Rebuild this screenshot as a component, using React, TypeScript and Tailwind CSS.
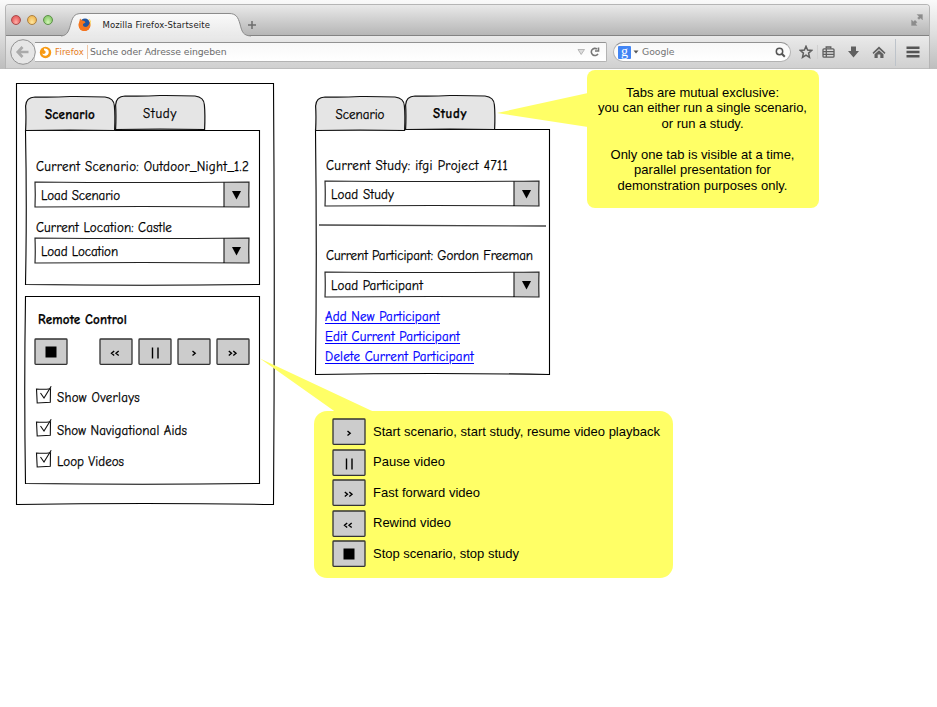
import { useLayoutEffect, useRef, type ReactNode } from "react";

const HAND = "font-['Comic_Sans_MS','Comic_Neue','Open_Sans',sans-serif] [-webkit-text-stroke:0.25px_currentColor]";

/* A single line of text whose tracking is computed so it fills the given width. */
function Fit({ w, className = "", children }: { w: number; className?: string; children: ReactNode }) {
  const ref = useRef<HTMLSpanElement>(null);
  useLayoutEffect(() => {
    const el = ref.current;
    if (!el) return;
    const n = (el.textContent || "").length;
    el.style.letterSpacing = "0px";
    const natural = el.getBoundingClientRect().width;
    el.style.letterSpacing = `${(w - natural) / n}px`;
  }, [w]);
  return (
    <span ref={ref} className={`inline-block shrink-0 whitespace-pre ${className}`}>
      {children}
    </span>
  );
}

function Frame({ w, h, top = 0, right = 0, bottom = 0, left = 0 }: { w: number; h: number; top?: number; right?: number; bottom?: number; left?: number }) {
  const r = w - 0.5;
  const b = h - 0.5;
  return (
    <svg className="pointer-events-none absolute inset-0" width={w} height={h} overflow="visible" fill="none" stroke="#000" strokeWidth="1.1">
      <path d={`M.5 .5Q${w / 2} ${0.5 + top} ${r} .5Q${r + right} ${h / 2} ${r} ${b}Q${w / 2} ${b + bottom} .5 ${b}Q${0.5 + left} ${h / 2} .5 .5Z`} />
    </svg>
  );
}

function Tab({ label, w, bold = false, low = false }: { label: string; w: number; bold?: boolean; low?: boolean }) {
  return (
    <div className={`relative flex h-[35px] w-[90px] items-center justify-center ${low ? "mt-px" : ""}`}>
      <svg className="absolute inset-0" width="90" height="35" overflow="visible" fill="#e5e5e5" stroke="#111" strokeWidth="1.2">
        <path d="M.6 34.5Q1.3 20 .6 10Q1 1.4 10 1Q28 1.5 45 .5Q65 .4 80 1Q89 2 89.4 10Q90.3 20 89.6 34.5Q45 33.7 .6 34.5Z" />
      </svg>
      <Fit w={w} className={`relative mt-[3px] text-[13px] leading-5 ${bold ? "font-bold" : ""}`}>{label}</Fit>
    </div>
  );
}

function Select({ label, w }: { label: string; w: number }) {
  return (
    <div className="relative flex h-[27px] w-[216px] items-center">
      <svg className="absolute inset-0" width="216" height="27" fill="none">
        <path d="M190 1H215V26H190Z" fill="#ccc" />
        <path d="M1 1Q108 2 215 1Q214.6 14 215 26Q108 25 1 26Q1.5 14 1 1ZM190 1V26" stroke="#222" strokeWidth="1.15" />
        <path d="M198 10H207L202.500 18.500Z" fill="#000" />
      </svg>
      <Fit w={w} className="relative ml-[7px] mt-[2px] text-[13px] leading-5">{label}</Fit>
    </div>
  );
}

type Kind = "stop" | "rewind" | "pause" | "play" | "forward";
const GLYPHS: Record<Kind, string> = {
  stop: "",
  rewind: "M15.200 13L12.500 15.300L15.200 17.500M19.700 13L17 15.300L19.700 17.500",
  pause: "M14.500 9.500V20.500M20 9.500V20.500",
  play: "M15.500 13L18.200 15.300L15.500 17.500",
  forward: "M12.800 13L15.500 15.300L12.800 17.500M17.300 13L20 15.300L17.300 17.500",
};

function MediaButton({ kind }: { kind: Kind }) {
  return (
    <button className="block h-[27px] w-[34px] shrink-0">
      <svg width="34" height="27" fill="none" stroke="#000">
        <rect x="1" y="1" width="32" height="25.300" rx=".8" fill="#ccc" stroke="#333" strokeWidth="1.300" />
        {kind === "stop" ? <path d="M11.500 8.500H22.500V19.500H11.500Z" fill="#000" stroke="none" /> : <path d={GLYPHS[kind]} strokeWidth="1.400" />}
      </svg>
    </button>
  );
}

function Check({ label, w }: { label: string; w: number }) {
  return (
    <label className="flex h-5 items-center">
      <svg width="18" height="20" fill="none" stroke="#111" strokeWidth="1.1" overflow="visible">
        <path d="M.5 3Q8 3.700 14.500 2.700L14.300 16.200L1.200 17Z" />
        <path d="M4.500 7L8 12L15.200 .3" />
      </svg>
      <Fit w={w} className="ml-[3px] mt-[3px] text-[13px] leading-5">{label}</Fit>
    </label>
  );
}

function BrowserChrome() {
  return (
    <header className="h-[69px] bg-linear-to-b from-[#fafafa] via-[#dedede] to-[#bdbdbd]">
      <div className="h-1" />
      <div className="mx-[5px] mr-[7px] h-[65px] overflow-hidden rounded-t-[4px] border-x border-t border-[#b5b5b5]">
        <div className="relative flex h-[31px] items-center border-b border-[#838383] bg-linear-to-b from-[#e9e9e9] to-[#b6b6b6]">
          <div className="ml-[5px] flex gap-[6px]">
            <i className="size-[10px] rounded-full border border-[#a94c4c] bg-radial-[at_50%_80%] from-[#ffb0a8] to-[#df4044]" />
            <i className="size-[10px] rounded-full border border-[#ad8040] bg-radial-[at_50%_80%] from-[#ffe7a0] to-[#e9a83a]" />
            <i className="size-[10px] rounded-full border border-[#5c9048] bg-radial-[at_50%_80%] from-[#d3f7b6] to-[#70bb53]" />
          </div>
          <div className="relative ml-2 flex h-full w-[192px] items-center">
            <svg className="absolute left-0 top-0" width="192" height="32" overflow="visible">
              <defs>
                <linearGradient id="tab" x1="0" y1="0" x2="0" y2="1"><stop stopColor="#fafafa" /><stop offset="1" stopColor="#e9e9e9" /></linearGradient>
                <linearGradient id="fox" x1="0" y1="0" x2="1" y2="1"><stop stopColor="#ff9a1f" /><stop offset="1" stopColor="#dd431c" /></linearGradient>
              </defs>
              <path d="M0 31C7 30.500 8 25 10 18C12 10 15 8.500 21 8.500H168C175 8.500 177 12 179 19C181 27 182 30.500 190 31" fill="url(#tab)" stroke="#8b8b8b" />
              <circle cx="23.500" cy="20" r="6" fill="url(#fox)" />
              <circle cx="24" cy="18" r="4.500" fill="#23569f" />
              <path d="M18.500 16L19 13.500L21 15.500Q23.500 15 24.500 17.500L22 19Q21.500 22 25 22Q27.500 21.500 28.500 18Q30.500 23 26 25.500Q20.500 27.500 18 22.500Q17.200 19 18.500 16Z" fill="#f5751e" />
              <path d="M27.500 14Q30.500 17 29 22Q31 18 29 14.500Z" fill="#ffd13b" />
            </svg>
            <Fit w={107.500} className="relative ml-[41.5px] mt-[9px] font-['DejaVu_Sans',sans-serif] text-[8.5px] leading-4 text-[#222]">Mozilla Firefox-Startseite</Fit>
          </div>
          <svg className="mt-[9px] -ml-[6px]" width="10" height="10" stroke="#6d6d6d" strokeWidth="1.500"><path d="M5 1V9M1 5H9" /></svg>
          <svg className="ml-auto mr-[6px]" width="12" height="12" fill="#8c8c8c" stroke="#8c8c8c">
            <path d="M6 .5H11.500V6L9.500 4L8 5.500L6.500 4L8 2.500ZM.5 6V11.500H6L4.500 9.800L6 8.200L4 6.200L2.500 7.700Z" strokeWidth=".3" />
          </svg>
        </div>
        <div className="flex h-[33px] items-center border-b border-[#bdbdbd] bg-linear-to-b from-[#eaeaea] to-[#d0d0d0]">
          <svg className="relative ml-1 shrink-0" width="26" height="26">
            <circle cx="13" cy="13" r="12.300" fill="#e6e6e6" stroke="#929292" />
            <path d="M12.500 8L7.800 13L12.500 18M8 13H18.500" fill="none" stroke="#aaa" strokeWidth="2.700" />
          </svg>
          <div className="-ml-px flex h-[20px] w-[572px] shrink-0 items-center rounded-r-[2px] border border-l-0 border-[#b3b3b3] border-t-[#929292] bg-linear-to-b from-[#f8f8f8] to-white">
            <svg className="ml-[4px]" width="13" height="13">
              <circle cx="6.500" cy="6.500" r="5.700" fill="#f89a13" />
              <path d="M5 2.500Q8 2 9.500 4.500Q10.500 8 7.500 9.500Q4.500 10.500 3 7.500Q5 8.500 6.500 7Q7.500 5.500 5 4Z" fill="#fff" />
            </svg>
            <Fit w={29} className="ml-[3px] font-['DejaVu_Sans',sans-serif] text-[8.5px] leading-4 text-[#e67b22]">Firefox</Fit>
            <i className="ml-[3px] h-[14px] w-px bg-[#f1c6a3]" />
            <Fit w={136.500} className="ml-[2px] font-['DejaVu_Sans',sans-serif] text-[9.3px] leading-4 text-[#6c6c6c]">Suche oder Adresse eingeben</Fit>
            <svg className="ml-auto" width="8" height="6"><path d="M1 .5H7.500L4.200 5.500Z" fill="#ddd" stroke="#aaa" strokeWidth=".8" /></svg>
            <svg className="ml-[5px] mr-[6px]" width="10" height="10" fill="none" stroke="#777" strokeWidth="1.600"><path d="M7 2A3.600 3.600 0 1 0 8 6.800M8.500 .5V4H5" /></svg>
          </div>
          <div className="ml-[6px] flex h-[20px] w-[178px] shrink-0 items-center rounded-full border border-[#b3b3b3] border-t-[#929292] bg-linear-to-b from-[#f8f8f8] to-white">
            <b className="ml-[4px] flex size-[13px] items-center justify-center rounded-[1px] bg-[#4285f4] pb-px font-['Liberation_Serif',serif] text-[14px] font-normal leading-none text-white">g</b>
            <svg className="ml-[2px]" width="6" height="4"><path d="M.5 .5H5.500L3 3.500Z" fill="#555" /></svg>
            <Fit w={32.500} className="ml-[3px] font-['DejaVu_Sans',sans-serif] text-[9.3px] leading-4 text-[#757575]">Google</Fit>
            <svg className="ml-auto mr-[4px]" width="11" height="11" fill="none" stroke="#555"><circle cx="4.500" cy="4.500" r="3.200" strokeWidth="1.500" /><path d="M6.800 6.800L9.800 9.800" strokeWidth="2" /></svg>
          </div>
          <div className="ml-[8px] flex shrink-0 items-center">
            <svg width="14" height="14" fill="none" stroke="#5e5e5e" strokeWidth="1.500"><path d="M7 1.300L8.600 5L12.700 5.400L9.600 8.100L10.500 12.300L7 10.100L3.500 12.300L4.400 8.100L1.300 5.400L5.400 5Z" /></svg>
            <i className="ml-[4px] h-[14px] w-px bg-[#d0d0d0]" />
            <svg className="ml-[4px]" width="13" height="12" fill="none" stroke="#5e5e5e" strokeWidth="1.300"><rect x="1" y="2.800" width="11" height="8.400" rx="1" /><path d="M4.200 2.500V1H8.800V2.500M1 5.600H12M1 8.400H12M4.300 3V11" /></svg>
            <svg className="ml-[12px]" width="13" height="12" fill="#606060"><path d="M4 .5H9V5H12L6.500 11.500L1 5H4Z" /></svg>
            <svg className="ml-[12px]" width="14" height="13" fill="#606060"><path d="M7 .5L13.500 6.800L12.500 8L7 3L1.500 8L.5 6.800ZM2.500 8.200L7 4.200L11.500 8.200V12H8.300V8.500H5.700V12H2.500Z" /></svg>
            <i className="ml-[9px] h-[27px] w-px bg-[#bdc3ca]" />
            <svg className="ml-[10px]" width="14" height="12" stroke="#555" strokeWidth="2.500"><path d="M.5 1.800H13.500M.5 6H13.500M.5 10.200H13.500" /></svg>
          </div>
        </div>
      </div>
    </header>
  );
}

function TabsCallout() {
  const lines: [string, number][] = [
    ["Tabs are mutual exclusive:", 153],
    ["you can either run a single scenario,", 209],
    ["or run a study.", 82],
    ["", 0],
    ["Only one tab is visible at a time,", 184],
    ["parallel presentation for", 137],
    ["demonstration purposes only.", 170],
  ];
  return (
    <aside className="absolute left-[587px] top-[70px] h-[138px] w-[232px] rounded-[8px] bg-[#ff6] pr-px pt-[15px] font-['Liberation_Sans',Arial,sans-serif] text-[13px]">
      <svg className="absolute -left-[90px] top-0" width="91" height="60" fill="#ff6"><path d="M0 43L91 23V57Z" /></svg>
      {lines.map(([t, w], i) => (
        <div key={i} className="flex h-[15.5px] items-center justify-center leading-4">{t && <Fit w={w}>{t}</Fit>}</div>
      ))}
    </aside>
  );
}

function ControlsCallout() {
  const rows: [Kind, string, number][] = [
    ["play", "Start scenario, start study, resume video playback", 287],
    ["pause", "Pause video", 72],
    ["forward", "Fast forward video", 107],
    ["rewind", "Rewind video", 78],
    ["stop", "Stop scenario, stop study", 146],
  ];
  return (
    <aside className="absolute left-[314px] top-[410.5px] flex h-[167.5px] w-[358.5px] flex-col gap-[3.5px] rounded-[13px] bg-[#ff6] pl-[18px] pt-[7.5px] font-['Liberation_Sans',Arial,sans-serif] text-[13px]">
      <svg className="absolute -left-[54px] -top-[53px]" width="120" height="55" fill="#ff6"><path d="M0 .5L77 55H117L111 52.500Z" /></svg>
      {rows.map(([k, t, w]) => (
        <div key={k} className="flex h-[27px] items-center gap-[7px]">
          <MediaButton kind={k} />
          <Fit w={w} className="leading-4">{t}</Fit>
        </div>
      ))}
    </aside>
  );
}

export default function App() {
  return (
    <div className="relative h-[707px] w-[937px] overflow-hidden bg-white font-['Open_Sans',sans-serif] text-black">
      <BrowserChrome />
      <main className={`flex items-start pl-4 pt-[14px] ${HAND}`}>
        <section className="relative h-[422px] w-[258px] pl-[9px] pt-3">
          <Frame w={258} h={422} right={1.5} bottom={-2} />
          <nav className="relative z-10 flex h-[35px]">
            <Tab label="Scenario" w={50} bold low />
            <Tab label="Study" w={34} />
          </nav>
          <div className="relative flex h-[155px] w-[235px] flex-col items-start pl-[9px] pt-[26px]">
            <Frame w={235} h={155} left={1.5} bottom={1.5} />
            <Fit w={213} className="ml-[2px] h-5 text-[13px] leading-[21px]">Current Scenario: Outdoor_Night_1.2</Fit>
            <div className="mt-[5px]"><Select label="Load Scenario" w={79} /></div>
            <Fit w={136} className="ml-[2px] mt-[9px] h-5 text-[13px] leading-[21px]">Current Location: Castle</Fit>
            <Select label="Load Location" w={77} />
          </div>
          <div className="relative mt-[11px] flex h-[188px] w-[235px] flex-col items-start pl-[9px] pt-[13px]">
            <Frame w={235} h={188} left={-1.5} bottom={1.5} />
            <Fit w={89} className="ml-1 h-5 text-[13px] font-bold leading-[21px]">Remote Control</Fit>
            <div className="mt-[9px] flex gap-[5px]">
              <div className="mr-[26px]"><MediaButton kind="stop" /></div>
              <MediaButton kind="rewind" />
              <MediaButton kind="pause" />
              <MediaButton kind="play" />
              <MediaButton kind="forward" />
            </div>
            <div className="ml-[2px] mt-[21px] flex flex-col gap-[13px]">
              <Check label="Show Overlays" w={83} />
              <Check label="Show Navigational Aids" w={130} />
              <div className="-mt-[2px]"><Check label="Loop Videos" w={67} /></div>
            </div>
          </div>
        </section>
        <section className="ml-[41px] pt-3">
          <nav className="relative z-10 flex h-[34px]">
            <Tab label="Scenario" w={49} low />
            <Tab label="Study" w={34} bold />
          </nav>
          <div className="relative flex h-[246px] w-[235px] flex-col items-start pl-[9px] pt-[26px]">
            <Frame w={235} h={246} left={1.5} bottom={-2} />
            <Fit w={182} className="ml-[2px] h-5 text-[13px] leading-[21px]">Current Study: ifgi Project 4711</Fit>
            <div className="mt-[5px]"><Select label="Load Study" w={63} /></div>
            <svg className="-ml-[5px] mt-[17px]" width="227" height="3" fill="none" stroke="#444" strokeWidth="1.300"><path d="M0 1Q110 1.200 227 2" /></svg>
            <Fit w={207} className="ml-[2px] mt-[18px] h-5 text-[13px] leading-[22px]">Current Participant: Gordon Freeman</Fit>
            <div className="mt-[6px]"><Select label="Load Participant" w={92} /></div>
            <div className="ml-px mt-2 flex flex-col items-start text-[13px] leading-[21px] text-[#00f]">
              <a className="h-5"><Fit w={115} className="underline underline-offset-2">Add New Participant</Fit></a>
              <a className="h-5"><Fit w={135} className="underline underline-offset-2">Edit Current Participant</Fit></a>
              <a className="h-5"><Fit w={149} className="underline underline-offset-2">Delete Current Participant</Fit></a>
            </div>
          </div>
        </section>
      </main>
      <TabsCallout />
      <ControlsCallout />
    </div>
  );
}
